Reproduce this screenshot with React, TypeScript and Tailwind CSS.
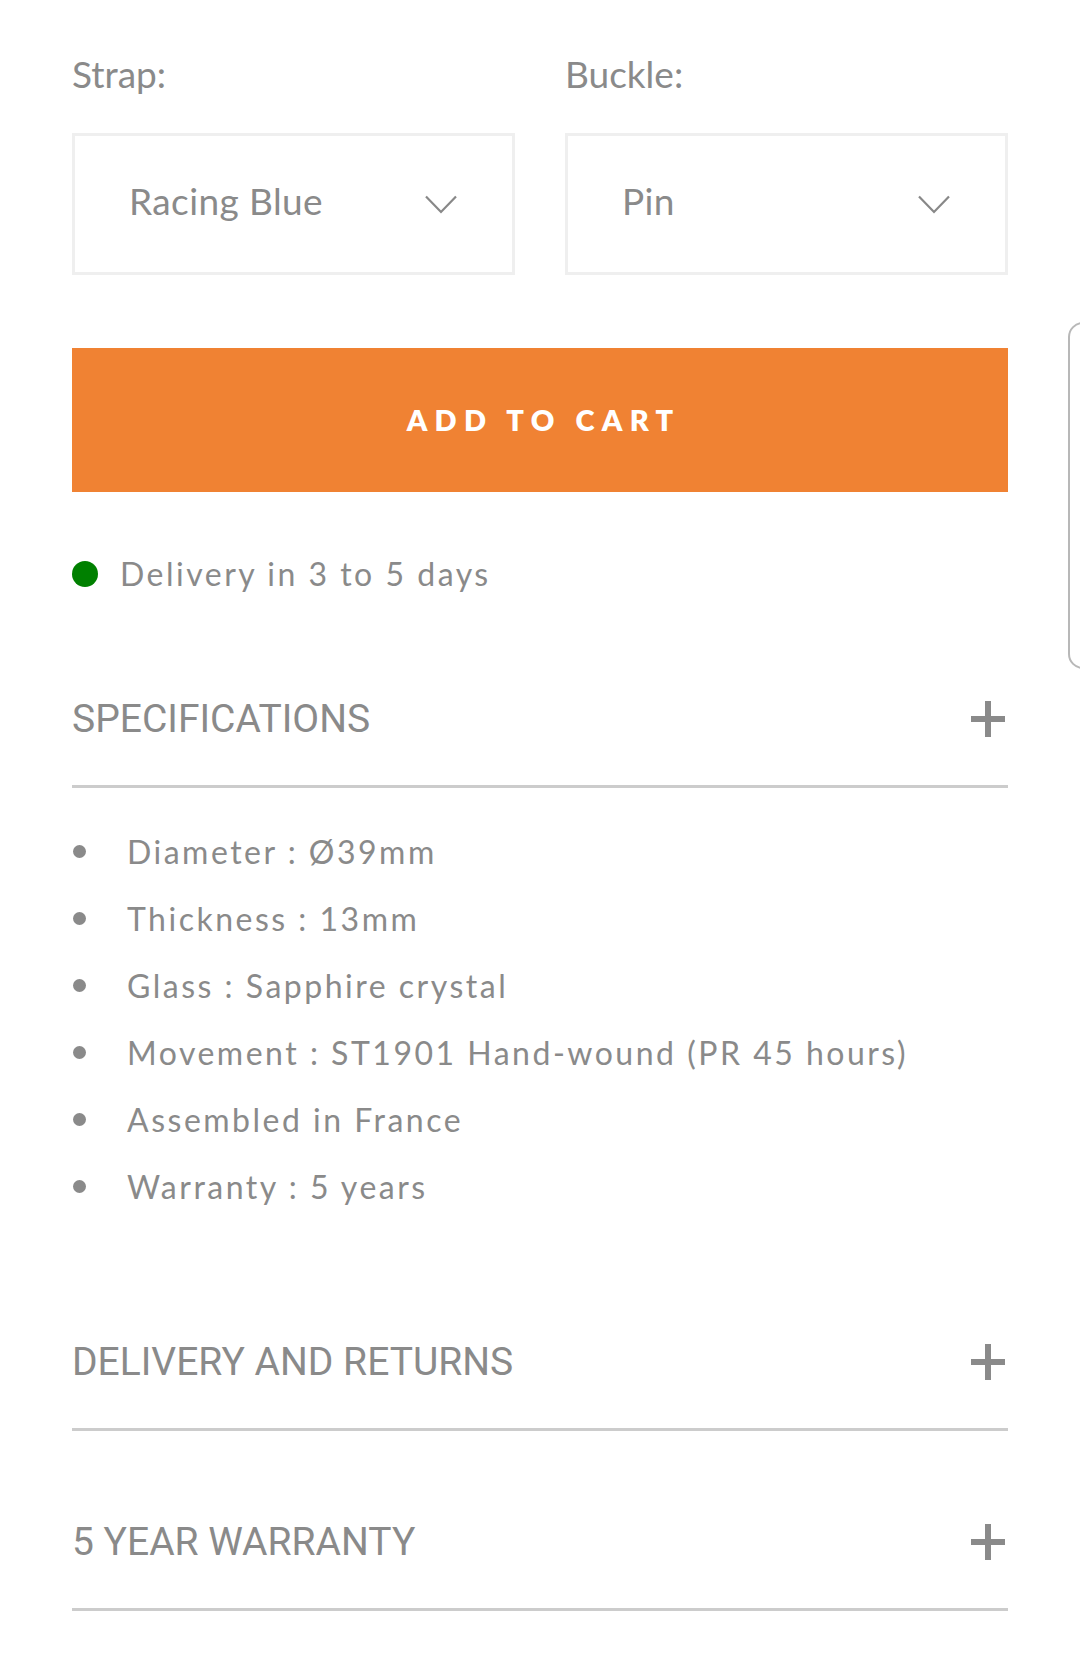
import { ReactNode } from "react";

const SPECS = [
  "Diameter : Ø39mm",
  "Thickness : 13mm",
  "Glass : Sapphire crystal",
  "Movement : ST1901 Hand-wound (PR 45 hours)",
  "Assembled in France",
  "Warranty : 5 years",
];

function Chevron() {
  return (
    <svg width="32" height="19" viewBox="0 0 32 19" fill="none" className="shrink-0">
      <polyline points="1,1.5 16,17 31,1.5" stroke="#888" strokeWidth="2.2" />
    </svg>
  );
}

function Plus() {
  return (
    <div className="relative w-[34px] h-[36px] mr-[3px] shrink-0">
      <span className="absolute left-[14px] top-0 w-[6px] h-[36px] bg-[#8a8a8a]" />
      <span className="absolute left-0 top-[15px] w-[34px] h-[6px] bg-[#8a8a8a]" />
    </div>
  );
}

function SelectBox({ label, value }: { label: string; value: string }) {
  return (
    <div>
      <div className="text-[37px] leading-[44px] text-[#8a8a8a]">{label}</div>
      <div className="mt-[37px] h-[142px] border-[3px] border-[#efefef] flex items-center justify-between pl-[54px] pr-[55px]">
        <span className="text-[37px] leading-[44px] tracking-[0.4px] text-[#8a8a8a] mb-[6px]">{value}</span>
        <Chevron />
      </div>
    </div>
  );
}

function AccordionHeader({ title, className = "" }: { title: string; className?: string }) {
  return (
    <div className={`flex items-center justify-between pb-[44px] border-b-[3px] border-[#cccccc] ${className}`}>
      <span className="text-[39px] leading-[44px] text-[#8a8a8a] font-['Roboto',sans-serif]">{title}</span>
      <Plus />
    </div>
  );
}

function Section({ children }: { children: ReactNode }) {
  return <div>{children}</div>;
}

export default function App() {
  return (
    <div className="relative w-[1080px] h-[1662px] overflow-hidden bg-white px-[72px] pt-[52px] font-['Lato',sans-serif]">
      {/* Strap / buckle pickers */}
      <div className="grid grid-cols-2 gap-x-[50px]">
        <SelectBox label="Strap:" value="Racing Blue" />
        <SelectBox label="Buckle:" value="Pin" />
      </div>

      <button
        type="button"
        className="mt-[73px] w-full h-[144px] bg-[#f08233] text-white text-[29px] font-extrabold tracking-[0.25em] flex items-center justify-center"
      >
        <span className="pl-[0.25em]">ADD TO CART</span>
      </button>

      <div className="mt-[60px] flex items-center h-[44px]">
        <span className="w-[26px] h-[26px] rounded-full bg-[#008000] shrink-0" />
        <span className="ml-[22px] text-[32px] tracking-[2.5px] text-[#8a8a8a]">Delivery in 3 to 5 days</span>
      </div>

      <Section>
        <AccordionHeader title="SPECIFICATIONS" className="mt-[101px]" />
        <ul className="pt-[30px]">
          {SPECS.map((s) => (
            <li key={s} className="h-[67px] flex items-center">
              <span className="ml-[1px] w-[13px] h-[13px] rounded-full bg-[#8a8a8a] shrink-0" />
              <span className="ml-[41px] text-[32px] tracking-[2.5px] text-[#8a8a8a]">{s}</span>
            </li>
          ))}
        </ul>
      </Section>

      <AccordionHeader title="DELIVERY AND RETURNS" className="mt-[120px]" />
      <AccordionHeader title="5 YEAR WARRANTY" className="mt-[89px]" />

      {/* partially visible side tab */}
      <div className="absolute left-[1068px] top-[322px] w-[40px] h-[347px] rounded-[15px] border-2 border-[#b8b8b8]" />
    </div>
  );
}
